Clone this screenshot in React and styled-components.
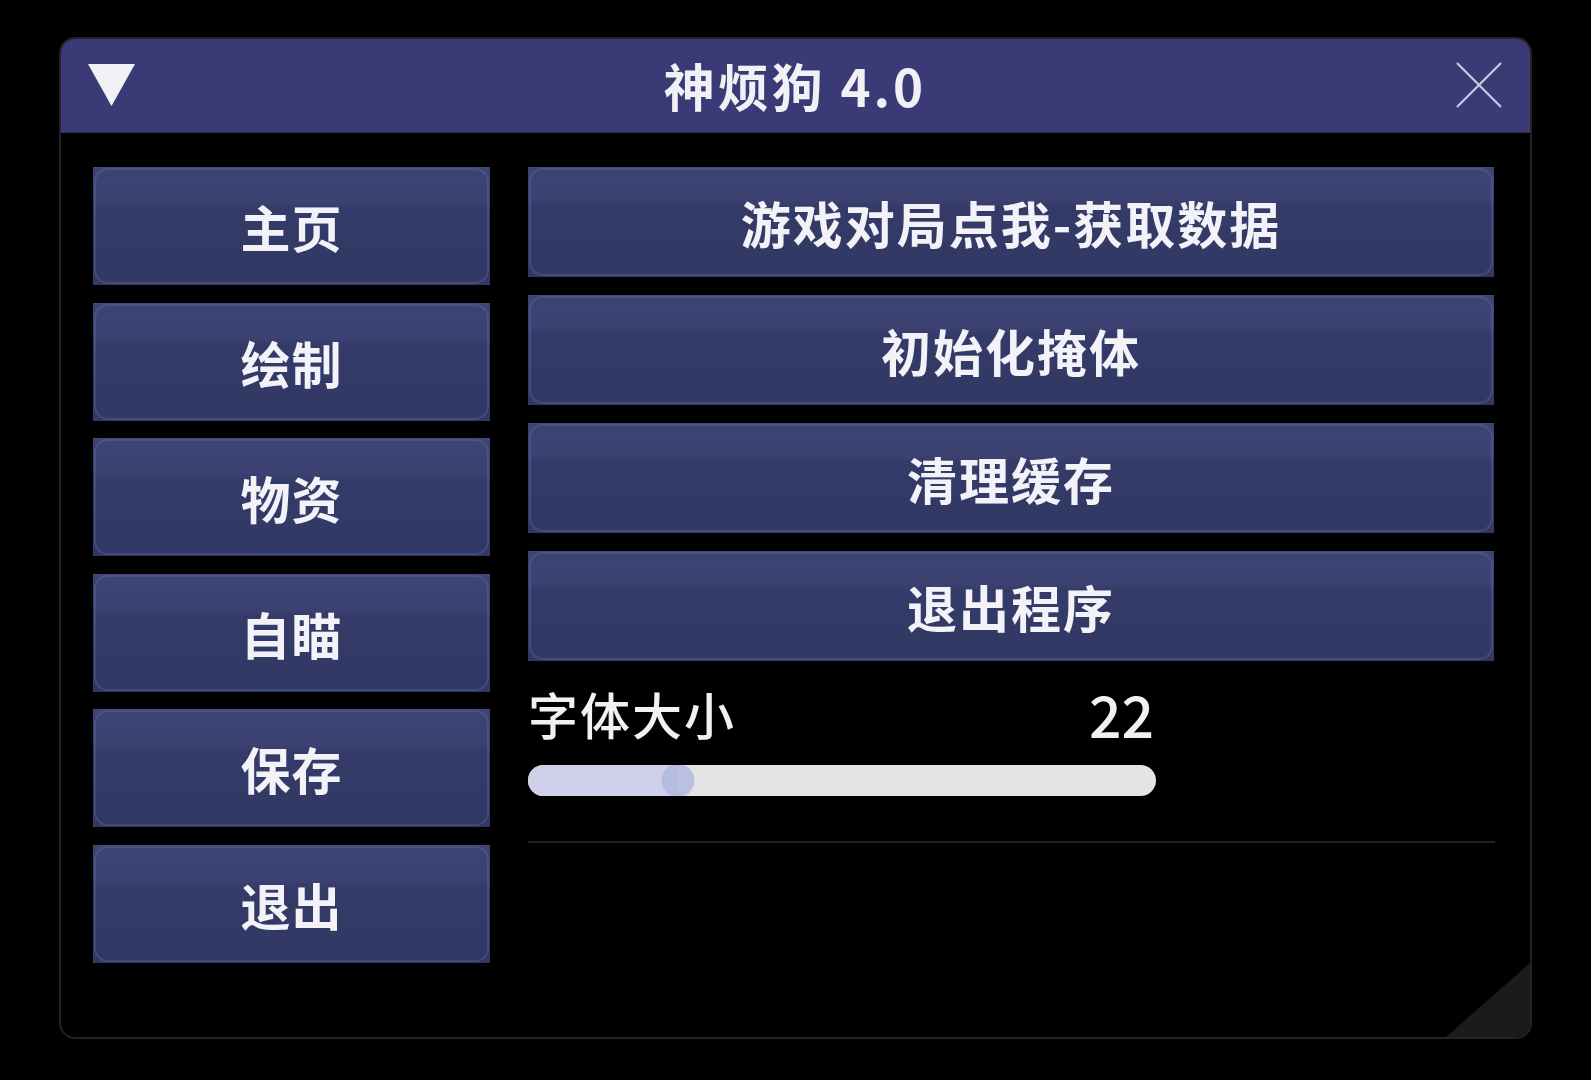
import { useState } from "react";
import styled, { createGlobalStyle } from "styled-components";

const GlobalStyle = createGlobalStyle`
  html, body {
    margin: 0;
    padding: 0;
    background: #000;
  }
  body {
    font-family: "Noto Sans CJK SC", "Noto Sans", sans-serif;
    color: #f0f0f5;
  }
`;

const Page = styled.div`
  width: 1591px;
  height: 1080px;
  padding: 37px 0 0 59px;
  box-sizing: border-box;
`;

const Window = styled.div`
  position: relative;
  width: 1473px;
  height: 1002px;
  box-sizing: border-box;
  border: 2px solid #232323;
  border-radius: 16px;
  overflow: hidden;
  background: #000;
`;

const TitleBar = styled.div`
  height: 95px;
  margin: -2px -2px 0;
  display: flex;
  align-items: center;
  justify-content: space-between;
  padding: 0 29px 0 29px;
  background: #3a3a76;
  border-bottom: 1px solid #2e2e60;
`;

const Collapse = styled.button`
  width: 47px;
  height: 44px;
  border: 0;
  padding: 0;
  background: transparent;
  cursor: pointer;
  display: flex;
  svg {
    display: block;
  }
`;

const Title = styled.div`
  font-size: 51px;
  font-weight: 700;
  letter-spacing: 3px;
  line-height: 1;
  padding-top: 2px;
`;

const Close = styled(Collapse)`
  width: 48px;
  height: 48px;
`;

const Body = styled.div`
  display: grid;
  grid-template-columns: 397px 966px;
  column-gap: 38px;
  padding: 34px 0 0 32px;
`;

const Column = styled.div`
  display: flex;
  flex-direction: column;
  gap: ${(p) => p.$gap}px;
`;

const NavButton = styled.button`
  position: relative;
  height: ${(p) => p.$h}px;
  border: 0;
  padding: 0;
  font-family: inherit;
  font-size: 50px;
  font-weight: 700;
  color: #f2f2f8;
  letter-spacing: ${(p) => p.$spacing || 1}px;
  cursor: pointer;
  background: linear-gradient(
    to bottom,
    #3d4373 0%,
    #3b4171 30%,
    #343b68 36%,
    #303863 100%
  );
  box-shadow: inset 0 1px 0 #434979;
  &::after {
    content: "";
    position: absolute;
    inset: 1px;
    border-radius: 14px;
    border: 2px solid rgba(105, 115, 175, 0.32);
    pointer-events: none;
  }
  &:hover {
    filter: brightness(1.08);
  }
`;

const SliderBlock = styled.div`
  width: 628px;
  padding-top: 2px;
`;

const SliderHead = styled.div`
  display: flex;
  justify-content: space-between;
  align-items: center;
  height: 64px;
`;

const Label = styled.span`
  font-size: 50px;
  font-weight: 500;
  letter-spacing: 2px;
`;

const Value = styled.span`
  font-size: 57px;
  font-weight: 500;
  margin-right: 2px;
`;

const Track = styled.div`
  position: relative;
  margin-top: 20px;
  height: 31px;
  border-radius: 16px;
  background: #e4e4e6;
  overflow: hidden;
`;

const Fill = styled.div`
  height: 100%;
  background: #d0d0ea;
`;

const Knob = styled.div`
  position: absolute;
  top: -1px;
  width: 33px;
  height: 33px;
  border-radius: 50%;
  background: rgba(172, 180, 222, 0.75);
  transform: translateX(-50%);
`;

const Divider = styled.hr`
  width: 967px;
  margin: 27px 0 0;
  border: 0;
  height: 2px;
  background: #222;
`;

const Grip = styled.div`
  position: absolute;
  right: 0;
  bottom: 0;
  width: 84px;
  height: 74px;
  background: #1b1b1b;
  clip-path: polygon(100% 0, 100% 100%, 0 100%);
`;

const navItems = ["主页", "绘制", "物资", "自瞄", "保存", "退出"];
const actions = ["游戏对局点我-获取数据", "初始化掩体", "清理缓存", "退出程序"];

export default function App() {
  const [size] = useState(22);
  const knobAt = 150;

  return (
    <Page>
      <GlobalStyle />
      <Window>
        <TitleBar>
          <Collapse aria-label="collapse">
            <svg width="47" height="44" viewBox="0 0 47 44">
              <polygon points="0,1 47,1 23.5,43" fill="#f2f2f6" />
            </svg>
          </Collapse>
          <Title>神烦狗 4.0</Title>
          <Close aria-label="close">
            <svg width="48" height="48" viewBox="0 0 48 48">
              <path
                d="M2 2 L46 46 M46 2 L2 46"
                stroke="#c9c9e2"
                strokeWidth="2.2"
                fill="none"
              />
            </svg>
          </Close>
        </TitleBar>
        <Body>
          <Column $gap={17.6}>
            {navItems.map((t) => (
              <NavButton key={t} $h={118}>
                {t}
              </NavButton>
            ))}
          </Column>
          <Column $gap={18}>
            {actions.map((t) => (
              <NavButton key={t} $h={110} $spacing={2}>
                {t}
              </NavButton>
            ))}
            <SliderBlock>
              <SliderHead>
                <Label>字体大小</Label>
                <Value>{size}</Value>
              </SliderHead>
              <Track>
                <Fill style={{ width: knobAt }} />
                <Knob style={{ left: knobAt }} />
              </Track>
            </SliderBlock>
            <Divider />
          </Column>
        </Body>
        <Grip />
      </Window>
    </Page>
  );
}
